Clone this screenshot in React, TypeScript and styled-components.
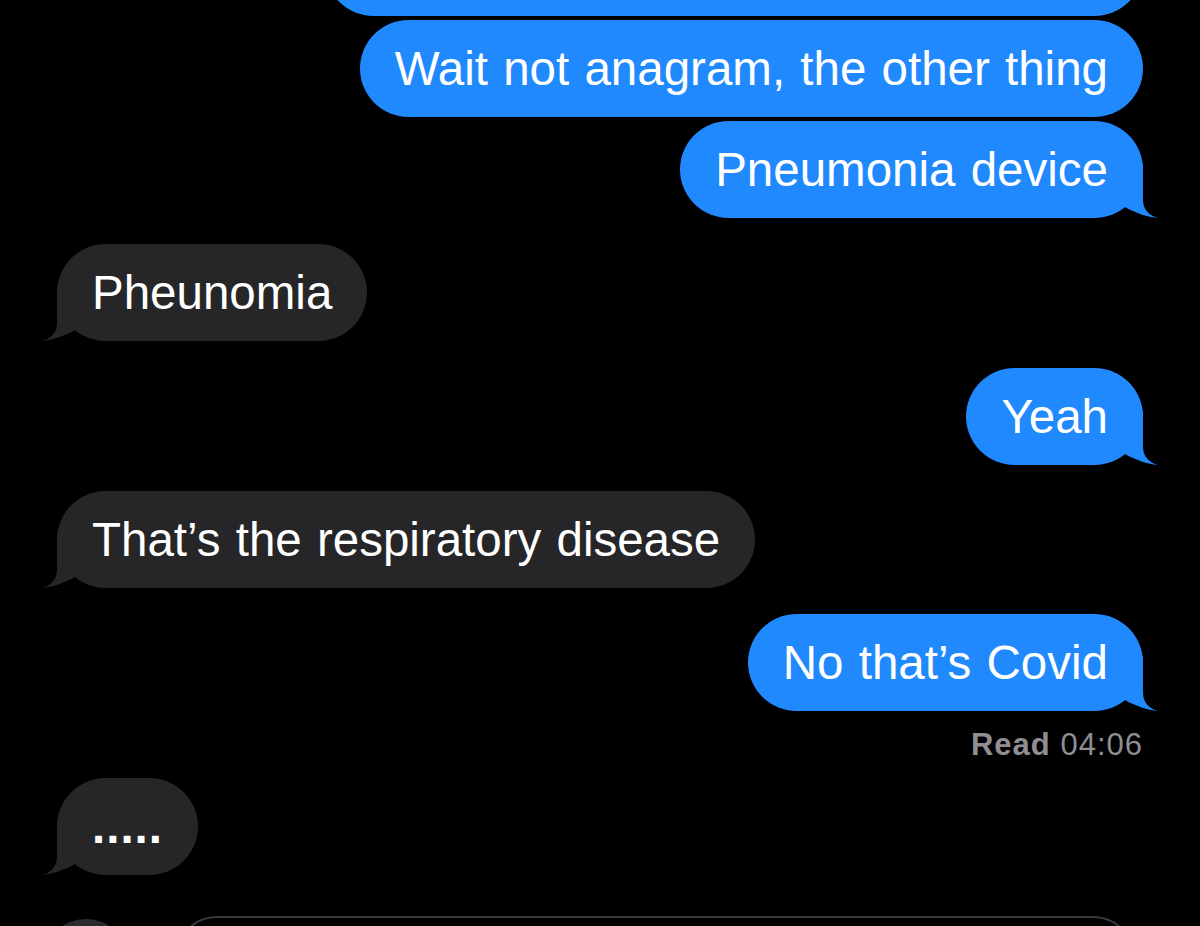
import React from "react";
import styled, { createGlobalStyle } from "styled-components";

const GlobalStyle = createGlobalStyle`
  html, body {
    margin: 0;
    padding: 0;
    background: #000;
  }
  body {
    font-family: "Liberation Sans", Arial, sans-serif;
    -webkit-font-smoothing: antialiased;
  }
`;

const BLUE = "#2089fd";
const GRAY = "#262628";

const Screen = styled.div`
  width: 1200px;
  height: 926px;
  background: #000;
  overflow: hidden;
  display: flex;
  flex-direction: column;
  justify-content: flex-end;
`;

const Thread = styled.div`
  display: flex;
  flex-direction: column;
  padding: 0 57px;
`;

const Row = styled.div<{ $out: boolean; $gap: number }>`
  display: flex;
  justify-content: ${(p) => (p.$out ? "flex-end" : "flex-start")};
  margin-top: ${(p) => p.$gap}px;
`;

const Bubble = styled.div<{ $out: boolean }>`
  position: relative;
  background: ${(p) => (p.$out ? BLUE : GRAY)};
  color: #fff;
  font-size: 47.5px;
  line-height: 57px;
  word-spacing: 2px;
  padding: 20px 35px;
  border-radius: 49px;
  white-space: nowrap;
`;

/* Earlier message that is scrolled mostly out of view above the screen */
const ScrolledBubble = styled.div<{ $width: number }>`
  width: ${(p) => p.$width}px;
  height: 97px;
  border-radius: 49px;
  background: ${BLUE};
`;

const Dots = styled.span`
  font-weight: 700;
  letter-spacing: 1px;
`;

const Tail = styled.svg<{ $out: boolean }>`
  position: absolute;
  bottom: 0;
  width: 50px;
  height: 55px;
  overflow: visible;
  ${(p) => (p.$out ? "right: -15px;" : "left: -15px; transform: scaleX(-1);")}
`;

const Receipt = styled.div`
  align-self: flex-end;
  margin: 16px 0 15px;
  font-size: 31px;
  line-height: 36px;
  color: #8e8e93;
  letter-spacing: 1px;
`;

const ReceiptLabel = styled.span`
  font-weight: 700;
`;

const Composer = styled.div`
  height: 10px;
  margin-top: 41px;
  display: flex;
  align-items: flex-start;
  gap: 45px;
  padding-left: 42px;
`;

const AppButton = styled.div`
  flex: none;
  width: 88px;
  height: 88px;
  margin-top: 3px;
  border-radius: 50%;
  background: #2a2a2c;
`;

const InputField = styled.div`
  flex: none;
  box-sizing: border-box;
  width: 960px;
  height: 90px;
  border: 2px solid #3a3a3c;
  border-radius: 42px;
`;

type Msg = { text: React.ReactNode; out: boolean; gap: number; tail: boolean };

const messages: Msg[] = [
  { text: "Wait not anagram, the other thing", out: true, gap: 4, tail: false },
  { text: "Pneumonia device", out: true, gap: 4, tail: true },
  { text: "Pheunomia", out: false, gap: 26, tail: true },
  { text: "Yeah", out: true, gap: 27, tail: true },
  { text: "That\u2019s the respiratory disease", out: false, gap: 26, tail: true },
  { text: "No that\u2019s Covid", out: true, gap: 26, tail: true },
];

const TailShape: React.FC<{ out: boolean }> = ({ out }) => (
  <Tail $out={out} viewBox="0 0 50 55" aria-hidden="true">
    <path
      d="M35 0 L35 37 C35 47 42 53 50 55 C40 54 27 50 17 44 L2 27 Z"
      fill={out ? BLUE : GRAY}
    />
  </Tail>
);

const Message: React.FC<{ msg: Msg }> = ({ msg }) => (
  <Row $out={msg.out} $gap={msg.gap}>
    <Bubble $out={msg.out}>
      {msg.text}
      {msg.tail && <TailShape out={msg.out} />}
    </Bubble>
  </Row>
);

export default function App() {
  return (
    <>
      <GlobalStyle />
      <Screen>
        <Thread>
          <Row $out={true} $gap={0}>
            <ScrolledBubble $width={818} />
          </Row>
          {messages.map((m, i) => (
            <Message key={i} msg={m} />
          ))}
          <Receipt>
            <ReceiptLabel>Read</ReceiptLabel> 04:06
          </Receipt>
          <Message
            msg={{ text: <Dots>.....</Dots>, out: false, gap: 0, tail: true }}
          />
        </Thread>
        <Composer>
          <AppButton />
          <InputField />
        </Composer>
      </Screen>
    </>
  );
}
